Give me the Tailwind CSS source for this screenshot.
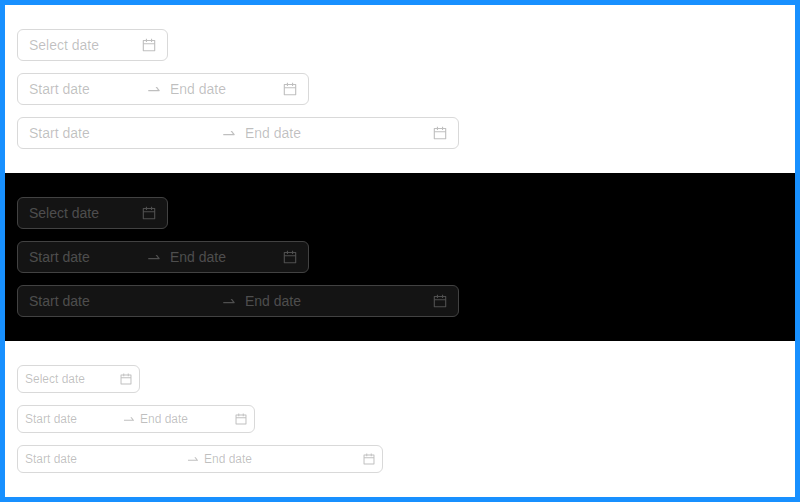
<!DOCTYPE html>
<html lang="en">
<head>
<meta charset="utf-8">
<title>Date pickers</title>
<script src="https://cdn.jsdelivr.net/npm/@tailwindcss/browser@4"></script>
</head>
<body class="h-[502px] overflow-hidden border-[5px] border-[#1890ff] bg-white font-['Liberation_Sans',Arial,sans-serif]">
<svg class="hidden">
  <symbol id="calendar" viewBox="0 0 1024 1024"><path fill="currentColor" d="M880 184H712v-64c0-4.400-3.600-8-8-8h-56c-4.400 0-8 3.600-8 8v64H384v-64c0-4.400-3.600-8-8-8h-56c-4.400 0-8 3.600-8 8v64H144c-17.700 0-32 14.300-32 32v664c0 17.700 14.300 32 32 32h736c17.700 0 32-14.300 32-32V216c0-17.700-14.300-32-32-32zm-40 656H184V460h656v380zM184 392V256h128v48c0 4.400 3.600 8 8 8h56c4.400 0 8-3.600 8-8v-48h256v48c0 4.400 3.600 8 8 8h56c4.400 0 8-3.600 8-8v-48h128v136H184z"/></symbol>
  <symbol id="swap" viewBox="0 0 1024 1024"><path fill="currentColor" d="M873.100 596.200l-164-208A32 32 0 00684 376h-64.800c-6.700 0-10.400 7.700-6.300 13l144.300 183H152c-4.400 0-8 3.600-8 8v60c0 4.400 3.600 8 8 8h695.900c26.800 0 41.700-30.800 25.200-51.800z"/></symbol>
</svg>

<section class="flex h-[168px] flex-col gap-3 bg-white px-3 py-6 text-sm text-black/25">
  <div class="flex h-8 w-[151px] items-center rounded-md border border-[#d9d9d9] bg-white px-[10px]">
    <span class="flex-1 pl-px">Select date</span>
    <svg class="size-4"><use href="#calendar"/></svg>
  </div>
  <div class="flex h-8 w-[292px] items-center rounded-md border border-[#d9d9d9] bg-white px-[10px]">
    <span class="w-[118px] pl-px">Start date</span>
    <svg class="mr-2 size-4"><use href="#swap"/></svg>
    <span class="flex-1">End date</span>
    <svg class="size-4"><use href="#calendar"/></svg>
  </div>
  <div class="flex h-8 w-[442px] items-center rounded-md border border-[#d9d9d9] bg-white px-[10px]">
    <span class="w-[193px] pl-px">Start date</span>
    <svg class="mr-2 size-4"><use href="#swap"/></svg>
    <span class="flex-1">End date</span>
    <svg class="size-4"><use href="#calendar"/></svg>
  </div>
</section>

<section class="flex h-[168px] flex-col gap-3 bg-black px-3 py-6 text-sm text-white/25">
  <div class="flex h-8 w-[151px] items-center rounded-md border border-[#424242] bg-[#141414] px-[10px]">
    <span class="flex-1 pl-px">Select date</span>
    <svg class="size-4"><use href="#calendar"/></svg>
  </div>
  <div class="flex h-8 w-[292px] items-center rounded-md border border-[#424242] bg-[#141414] px-[10px]">
    <span class="w-[118px] pl-px">Start date</span>
    <svg class="mr-2 size-4"><use href="#swap"/></svg>
    <span class="flex-1">End date</span>
    <svg class="size-4"><use href="#calendar"/></svg>
  </div>
  <div class="flex h-8 w-[442px] items-center rounded-md border border-[#424242] bg-[#141414] px-[10px]">
    <span class="w-[193px] pl-px">Start date</span>
    <svg class="mr-2 size-4"><use href="#swap"/></svg>
    <span class="flex-1">End date</span>
    <svg class="size-4"><use href="#calendar"/></svg>
  </div>
</section>

<section class="flex h-[156px] flex-col gap-3 bg-white px-3 py-6 text-xs text-black/25">
  <div class="flex h-7 w-[123px] items-center rounded-md border border-[#d9d9d9] bg-white px-[6px]">
    <span class="flex-1 pl-px">Select date</span>
    <svg class="size-3.5"><use href="#calendar"/></svg>
  </div>
  <div class="flex h-7 w-[238px] items-center rounded-md border border-[#d9d9d9] bg-white px-[6px]">
    <span class="w-[98px] pl-px">Start date</span>
    <svg class="mr-1 size-3.5"><use href="#swap"/></svg>
    <span class="flex-1">End date</span>
    <svg class="size-3.5"><use href="#calendar"/></svg>
  </div>
  <div class="flex h-7 w-[366px] items-center rounded-md border border-[#d9d9d9] bg-white px-[6px]">
    <span class="w-[162px] pl-px">Start date</span>
    <svg class="mr-1 size-3.5"><use href="#swap"/></svg>
    <span class="flex-1">End date</span>
    <svg class="size-3.5"><use href="#calendar"/></svg>
  </div>
</section>
</body>
</html>
